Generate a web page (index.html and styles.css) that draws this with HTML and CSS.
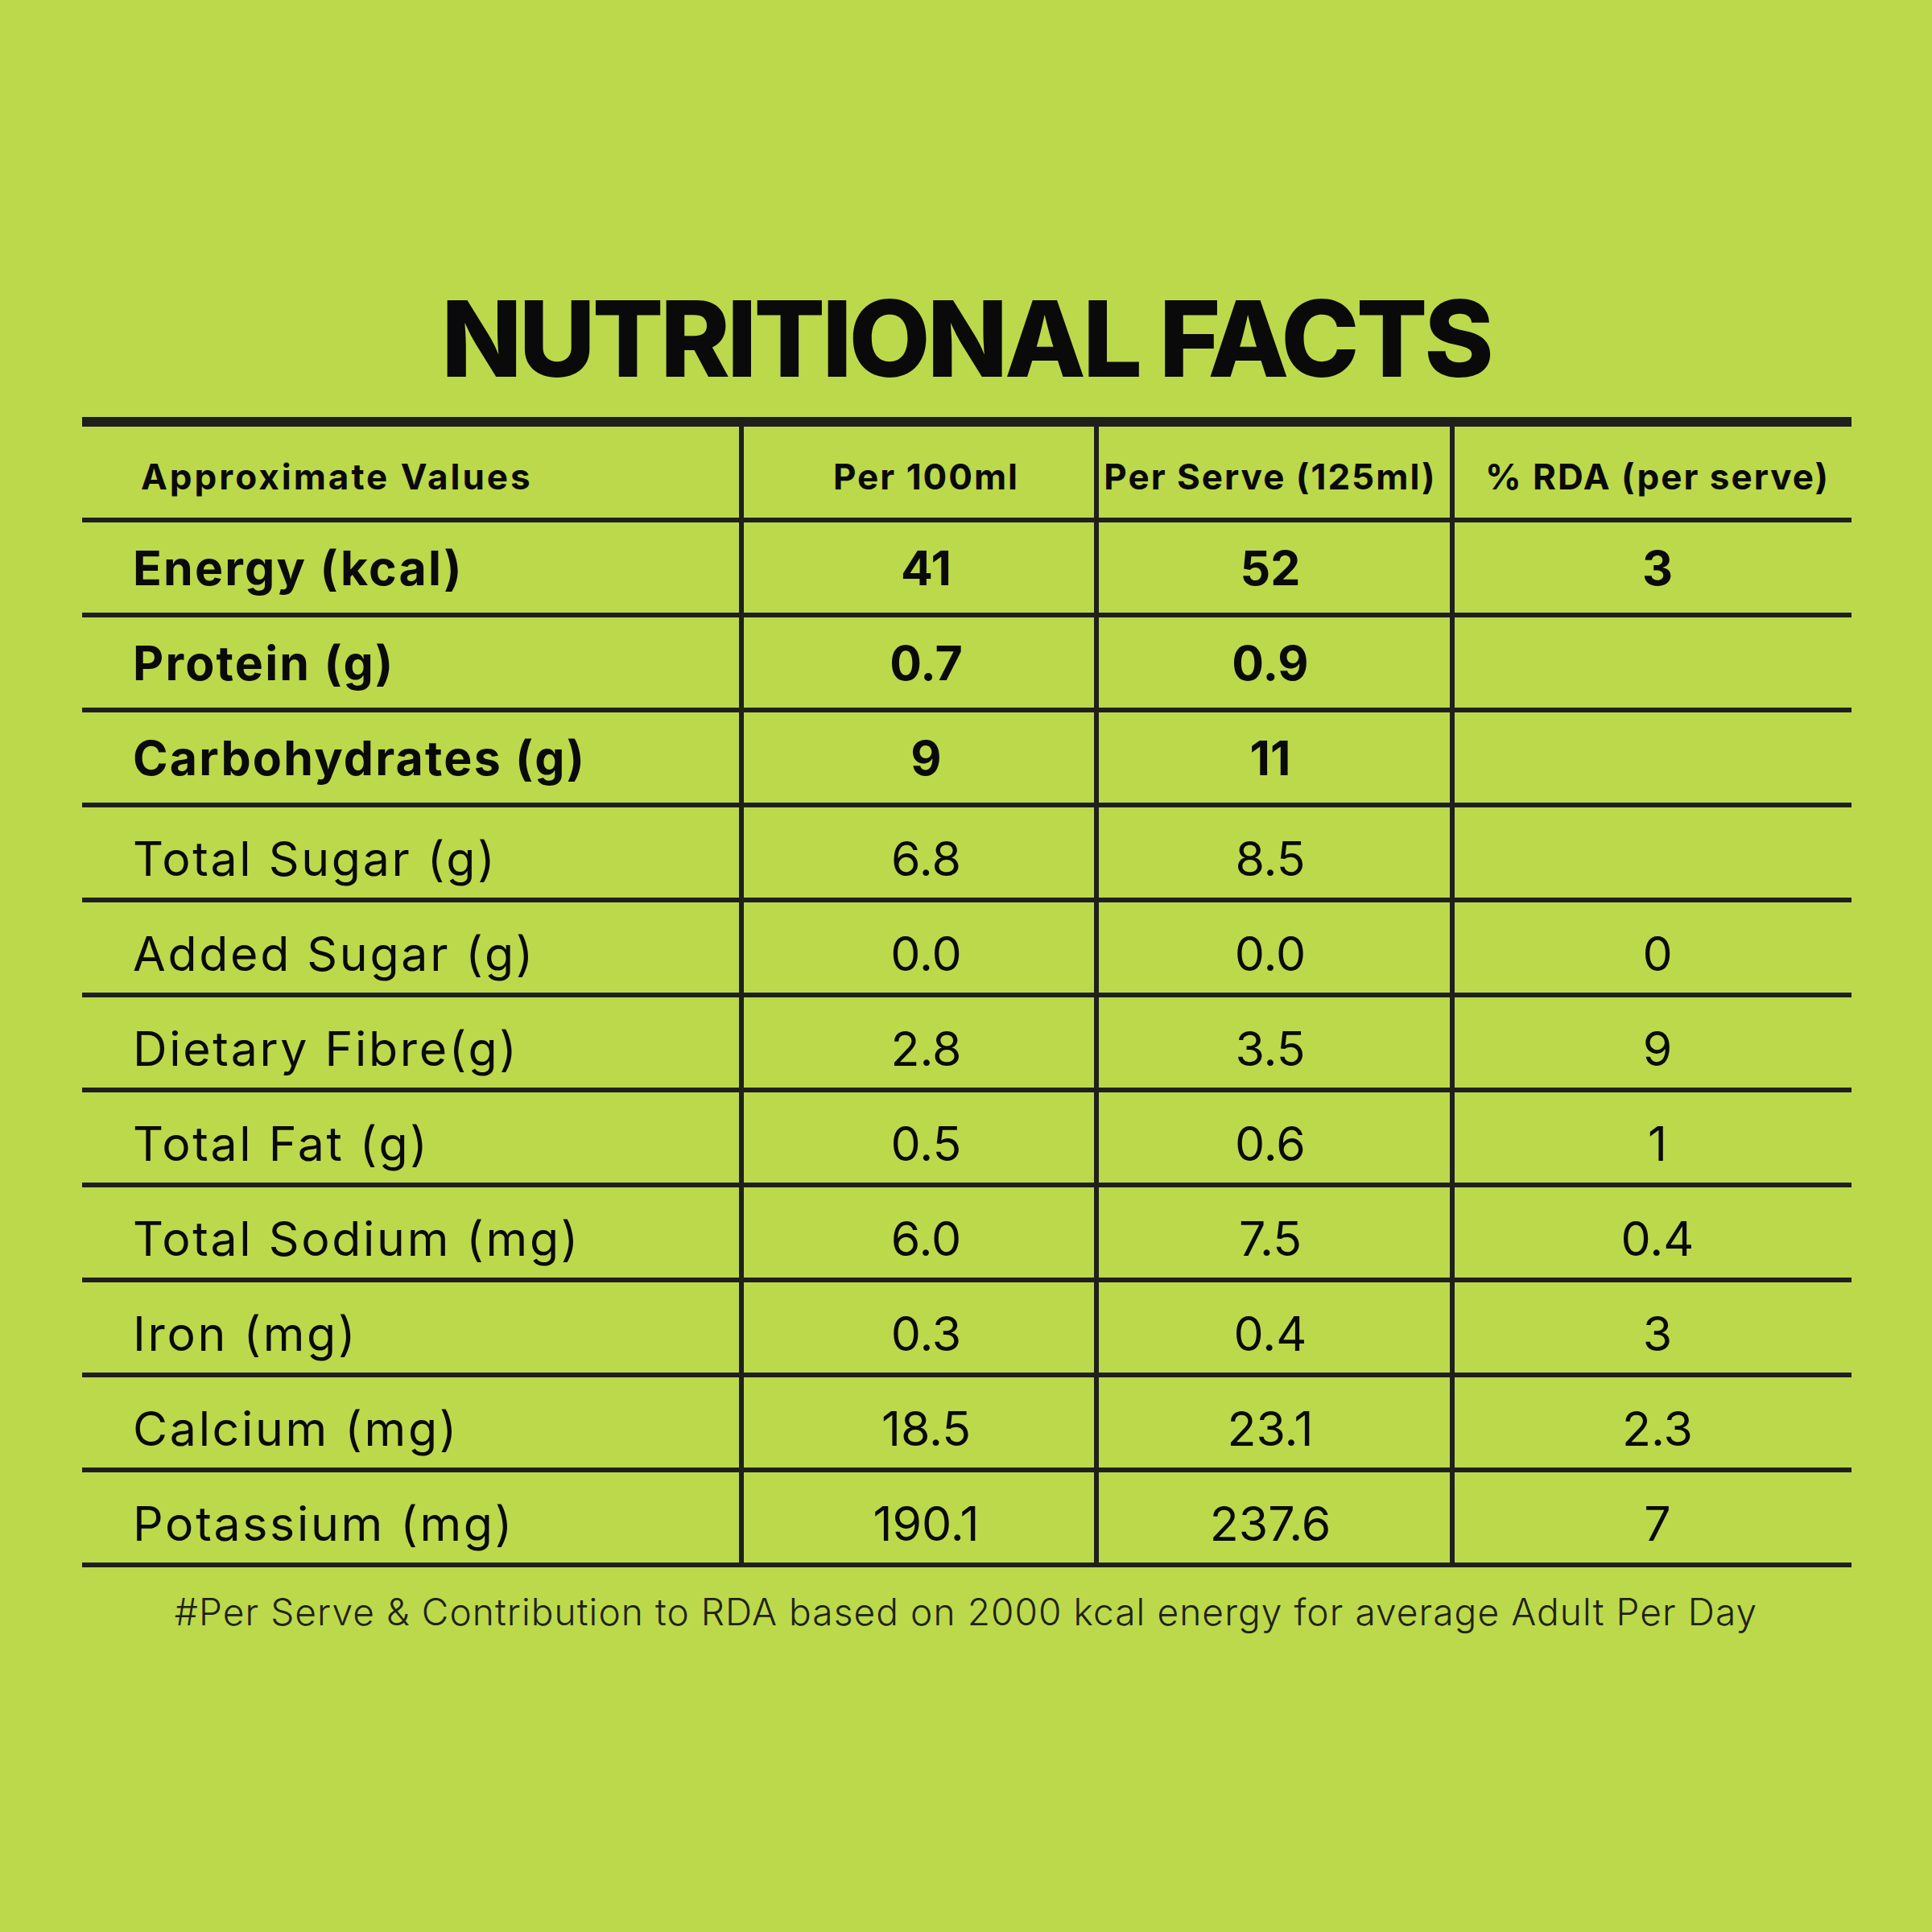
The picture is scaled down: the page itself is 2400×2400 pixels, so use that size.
FILE: index.html
```html
<!DOCTYPE html>
<html lang="en">
<head>
<meta charset="utf-8">
<title>Nutritional Facts</title>
<link rel="stylesheet" href="styles.css">
</head>
<body>
<main class="page">
  <h1 class="title">NUTRITIONAL FACTS</h1>
  <div class="facts">
    <div class="cell head label">Approximate Values</div>
    <div class="cell head c2">Per 100ml</div>
    <div class="cell head c3">Per Serve (125ml)</div>
    <div class="cell head c4">% RDA (per serve)</div>

    <div class="cell bold label">Energy (kcal)</div>
    <div class="cell bold c2">41</div>
    <div class="cell bold c3">52</div>
    <div class="cell bold c4">3</div>

    <div class="cell bold label">Protein (g)</div>
    <div class="cell bold c2">0.7</div>
    <div class="cell bold c3">0.9</div>
    <div class="cell bold c4"></div>

    <div class="cell bold label">Carbohydrates (g)</div>
    <div class="cell bold c2">9</div>
    <div class="cell bold c3">11</div>
    <div class="cell bold c4"></div>

    <div class="cell reg label">Total Sugar (g)</div>
    <div class="cell reg c2">6.8</div>
    <div class="cell reg c3">8.5</div>
    <div class="cell reg c4"></div>

    <div class="cell reg label">Added Sugar (g)</div>
    <div class="cell reg c2">0.0</div>
    <div class="cell reg c3">0.0</div>
    <div class="cell reg c4">0</div>

    <div class="cell reg label">Dietary Fibre(g)</div>
    <div class="cell reg c2">2.8</div>
    <div class="cell reg c3">3.5</div>
    <div class="cell reg c4">9</div>

    <div class="cell reg label">Total Fat (g)</div>
    <div class="cell reg c2">0.5</div>
    <div class="cell reg c3">0.6</div>
    <div class="cell reg c4">1</div>

    <div class="cell reg label">Total Sodium (mg)</div>
    <div class="cell reg c2">6.0</div>
    <div class="cell reg c3">7.5</div>
    <div class="cell reg c4">0.4</div>

    <div class="cell reg label">Iron (mg)</div>
    <div class="cell reg c2">0.3</div>
    <div class="cell reg c3">0.4</div>
    <div class="cell reg c4">3</div>

    <div class="cell reg label">Calcium (mg)</div>
    <div class="cell reg c2">18.5</div>
    <div class="cell reg c3">23.1</div>
    <div class="cell reg c4">2.3</div>

    <div class="cell reg label">Potassium (mg)</div>
    <div class="cell reg c2">190.1</div>
    <div class="cell reg c3">237.6</div>
    <div class="cell reg c4">7</div>
  </div>
  <p class="note">#Per Serve &amp; Contribution to RDA based on 2000 kcal energy for average Adult Per Day</p>
</main>
</body>
</html>
```
FILE: styles.css
```css
* { box-sizing: border-box; }

html, body {
  margin: 0;
  padding: 0;
}

body {
  width: 2400px;
  height: 2400px;
  background: #bcd94b;
  font-family: "Inter", "Liberation Sans", sans-serif;
  color: #0a0a0a;
}

.page {
  padding-top: 355px;
  display: flex;
  flex-direction: column;
  align-items: center;
}

.title {
  margin: 0;
  font-size: 131px;
  line-height: 1;
  font-weight: 800;
  letter-spacing: -4px;
  white-space: nowrap;
}

.facts {
  margin-top: 32px;
  margin-left: 2px;
  width: 2198px;
  display: grid;
  grid-template-columns: 816px 441px 442px 499px;
  grid-template-rows: 119px;
  grid-auto-rows: 118px;
  border-top: 12px solid #1f1f1c;
}

.cell {
  display: flex;
  align-items: center;
  justify-content: center;
  line-height: 1;
  border-bottom: 6px solid #1f1f1c;
  white-space: nowrap;
}

.c2, .c3, .c4 {
  border-left: 6px solid #1f1f1c;
}

.c2 { padding-left: 18px; }
.c3 { padding-right: 10px; }
.c4 { padding-left: 11px; }

.label {
  justify-content: flex-start;
  padding-left: 63px;
}

.head {
  font-size: 44px;
  font-weight: 700;
  letter-spacing: 2px;
  padding-top: 11px;
}

.head.label {
  padding-left: 73px;
  letter-spacing: 3px;
}

.bold {
  font-size: 59px;
  font-weight: 700;
}

.bold.label {
  letter-spacing: 2.2px;
}

.reg {
  font-size: 59px;
  font-weight: 400;
  padding-top: 14px;
}

.reg.label {
  letter-spacing: 2.7px;
}

.note {
  margin: 32px 0 0;
  font-size: 46px;
  line-height: 1;
  font-weight: 300;
  letter-spacing: 1.1px;
  color: #1e2214;
  white-space: nowrap;
}
```
